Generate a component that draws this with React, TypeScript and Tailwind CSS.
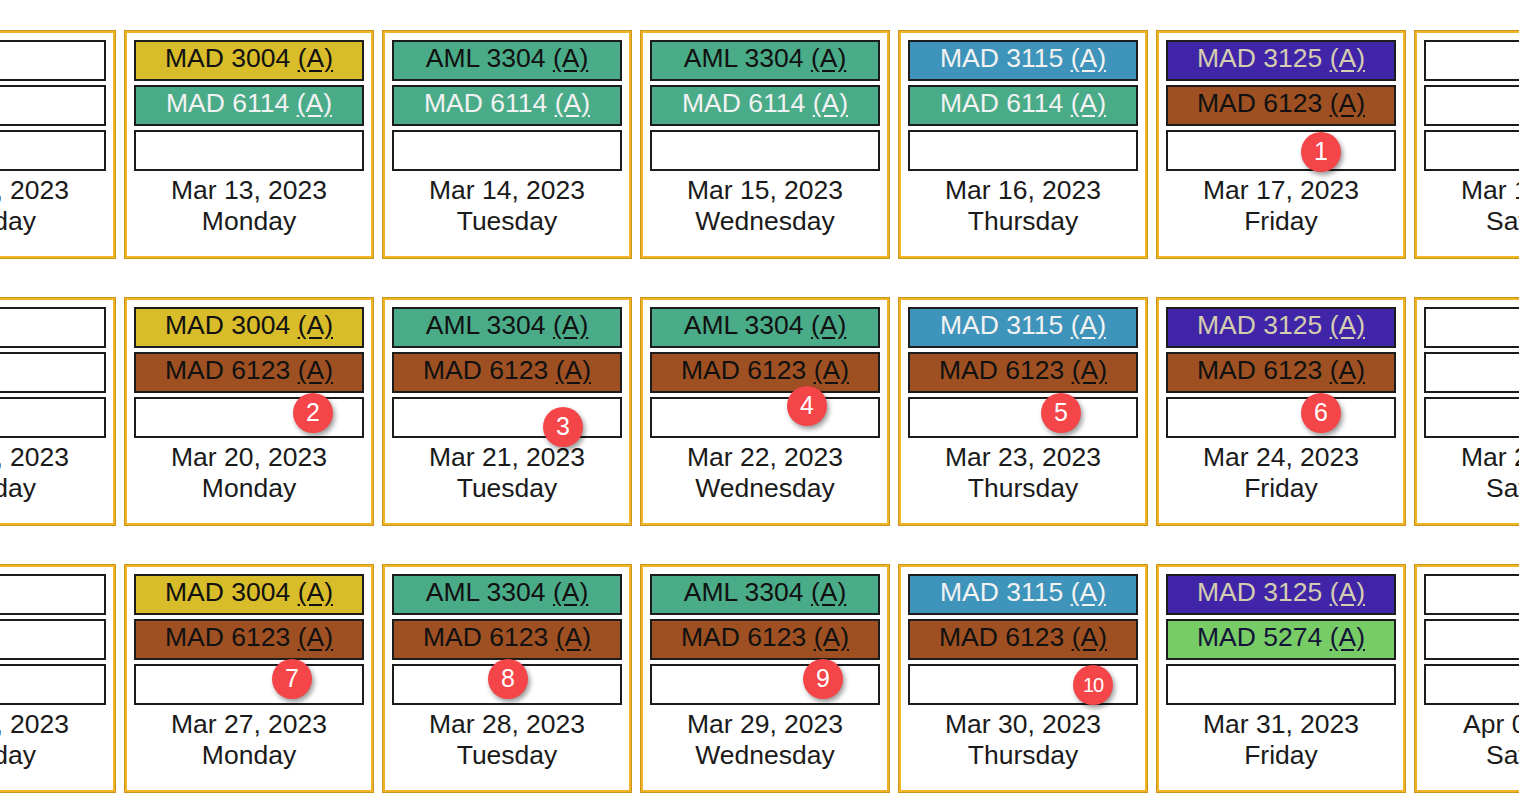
import React from "react";

type Course = { code: string; bg: string; fg: string };

const C: Record<string, Course> = {
  m3004: { code: "MAD 3004", bg: "bg-[#d8bc29]", fg: "text-[#111111]" },
  m6114: { code: "MAD 6114", bg: "bg-[#4aab88]", fg: "text-[#f2f2f2]" },
  a3304: { code: "AML 3304", bg: "bg-[#4aab88]", fg: "text-[#111111]" },
  m3115: { code: "MAD 3115", bg: "bg-[#3f94bb]", fg: "text-[#f2f2f2]" },
  m3125: { code: "MAD 3125", bg: "bg-[#4125a9]", fg: "text-[#d4cdb0]" },
  m6123: { code: "MAD 6123", bg: "bg-[#9e5022]", fg: "text-[#111111]" },
  m5274: { code: "MAD 5274", bg: "bg-[#77cc66]", fg: "text-[#141438]" },
};

interface Day {
  date: string;
  weekday: string;
  slots: (Course | null)[];
  badge?: { n: number; x: number; y: number };
}

const empty = [null, null, null];

const weeks: Day[][] = [
  [
    { date: "Mar 12, 2023", weekday: "Sunday", slots: empty },
    { date: "Mar 13, 2023", weekday: "Monday", slots: [C.m3004, C.m6114, null] },
    { date: "Mar 14, 2023", weekday: "Tuesday", slots: [C.a3304, C.m6114, null] },
    { date: "Mar 15, 2023", weekday: "Wednesday", slots: [C.a3304, C.m6114, null] },
    { date: "Mar 16, 2023", weekday: "Thursday", slots: [C.m3115, C.m6114, null] },
    { date: "Mar 17, 2023", weekday: "Friday", slots: [C.m3125, C.m6123, null], badge: { n: 1, x: 165, y: 122 } },
    { date: "Mar 18, 2023", weekday: "Saturday", slots: empty },
  ],
  [
    { date: "Mar 19, 2023", weekday: "Sunday", slots: empty },
    { date: "Mar 20, 2023", weekday: "Monday", slots: [C.m3004, C.m6123, null], badge: { n: 2, x: 189, y: 116 } },
    { date: "Mar 21, 2023", weekday: "Tuesday", slots: [C.a3304, C.m6123, null], badge: { n: 3, x: 181, y: 130 } },
    { date: "Mar 22, 2023", weekday: "Wednesday", slots: [C.a3304, C.m6123, null], badge: { n: 4, x: 167, y: 109 } },
    { date: "Mar 23, 2023", weekday: "Thursday", slots: [C.m3115, C.m6123, null], badge: { n: 5, x: 163, y: 116 } },
    { date: "Mar 24, 2023", weekday: "Friday", slots: [C.m3125, C.m6123, null], badge: { n: 6, x: 165, y: 116 } },
    { date: "Mar 25, 2023", weekday: "Saturday", slots: empty },
  ],
  [
    { date: "Mar 26, 2023", weekday: "Sunday", slots: empty },
    { date: "Mar 27, 2023", weekday: "Monday", slots: [C.m3004, C.m6123, null], badge: { n: 7, x: 168, y: 115 } },
    { date: "Mar 28, 2023", weekday: "Tuesday", slots: [C.a3304, C.m6123, null], badge: { n: 8, x: 126, y: 115 } },
    { date: "Mar 29, 2023", weekday: "Wednesday", slots: [C.a3304, C.m6123, null], badge: { n: 9, x: 183, y: 115 } },
    { date: "Mar 30, 2023", weekday: "Thursday", slots: [C.m3115, C.m6123, null], badge: { n: 10, x: 195, y: 121 } },
    { date: "Mar 31, 2023", weekday: "Friday", slots: [C.m3125, C.m5274, null] },
    { date: "Apr 01, 2023", weekday: "Saturday", slots: empty },
  ],
];

const Slot = ({ course }: { course: Course | null }) => (
  <div
    className={`h-[41px] border-2 border-[#1c1c1c] flex justify-center pt-[1px] leading-[30px] ${
      course ? `${course.bg} ${course.fg}` : "bg-white"
    }`}
  >
    {course && (
      <span>
        {course.code} <span className="underline underline-offset-[3px]">(A)</span>
      </span>
    )}
  </div>
);

const DayCard = ({ day }: { day: Day }) => (
  <div className="relative w-[250px] h-[229px] shrink-0 bg-white border-[3px] border-[#f1b425] outline-1 outline-[#c9961b] outline-offset-[-1px] pt-[7px] px-[7px]">
    <div className="flex flex-col gap-[4px]">
      {day.slots.map((s, i) => (
        <Slot key={i} course={s} />
      ))}
    </div>
    <div className="mt-[4px] text-center leading-[31px] text-[#1a1a1a]">
      <div>{day.date}</div>
      <div>{day.weekday}</div>
    </div>

    {/* numbered marker */}
    {day.badge && (
      <div
        className={`absolute w-[40px] h-[40px] rounded-full bg-[#f44548] text-white flex items-center justify-center shadow-[2px_3px_5px_rgba(0,0,0,0.4)] ${
          day.badge.n > 9 ? "text-[20px] tracking-[-1px]" : "text-[25px]"
        }`}
        style={{ left: day.badge.x - 23, top: day.badge.y - 23 }}
      >
        {day.badge.n}
      </div>
    )}
  </div>
);

export default function App() {
  return (
    <div className="w-[1519px] h-[811px] overflow-hidden bg-white pt-[30px] font-['Liberation_Sans',Arial,sans-serif] text-[26.5px]">
      <div className="flex flex-col gap-[38px]">
        {weeks.map((week, i) => (
          <div key={i} className="flex gap-[8px] ml-[-134px]">
            {week.map((day) => (
              <DayCard key={day.date} day={day} />
            ))}
          </div>
        ))}
      </div>
    </div>
  );
}
